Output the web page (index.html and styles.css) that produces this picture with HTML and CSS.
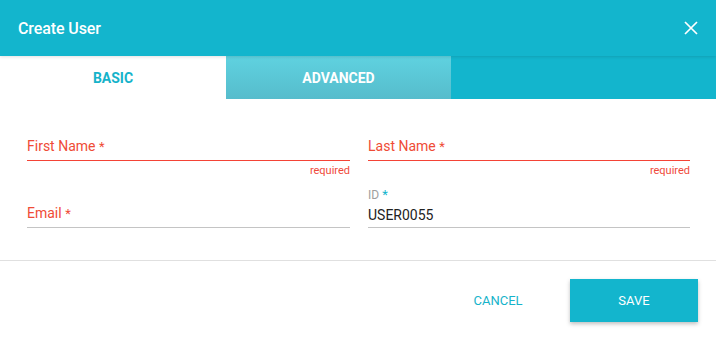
FILE: index.html
```html
<!DOCTYPE html>
<html>
<head>
<meta charset="utf-8">
<link rel="stylesheet" href="styles.css">
</head>
<body>
<div class="dialog">
  <header class="head">
    <div class="title-row">
      <h1 class="title">Create User</h1>
      <button class="close" aria-label="close">
        <svg width="14" height="14" viewBox="0 0 14 14"><path d="M1 1L13 13M13 1L1 13" stroke="#fff" stroke-width="1.7" fill="none"/></svg>
      </button>
    </div>
    <nav class="tabs">
      <div class="tab active">BASIC</div>
      <div class="tab inactive">ADVANCED</div>
    </nav>
  </header>
  <main class="form">
    <div class="field error">
      <label class="label">First Name <span class="star">*</span></label>
      <div class="line"></div>
      <div class="hint">required</div>
    </div>
    <div class="field error">
      <label class="label">Last Name <span class="star">*</span></label>
      <div class="line"></div>
      <div class="hint">required</div>
    </div>
    <div class="field error email">
      <label class="label">Email <span class="star">*</span></label>
      <div class="line grey"></div>
    </div>
    <div class="field filled">
      <label class="small-label">ID <span class="star teal">*</span></label>
      <div class="value">USER0055</div>
      <div class="line grey"></div>
    </div>
  </main>
  <footer class="actions">
    <button class="btn cancel">CANCEL</button>
    <button class="btn save">SAVE</button>
  </footer>
</div>
</body>
</html>
```
FILE: styles.css
```css
* { box-sizing: border-box; }
html, body { margin: 0; padding: 0; background: #fff; }
body { font-family: Roboto, "Noto Sans", sans-serif; width: 716px; height: 341px; overflow: hidden; }
.dialog { width: 716px; }
.head { background: #13b5cd; height: 99px; display: flex; flex-direction: column; }
.title-row { height: 56px; display: flex; align-items: center; justify-content: space-between; padding: 0 18px 0 18px; box-shadow: 0 1px 3px rgba(0,0,0,0.12); position: relative; z-index: 1; }
.title { margin: 0; font-size: 16px; font-weight: 500; color: #fff; letter-spacing: -0.1px; padding-top: 1px; }
.close { background: none; border: 0; padding: 0; width: 14px; height: 14px; display: flex; }
.tabs { display: flex; height: 43px; }
.tab { display: flex; align-items: center; justify-content: center; font-size: 14px; font-weight: 700; }
.tab.active { width: 226px; background: #fff; color: #16b3ca; }
.tab.inactive { width: 225px; background: linear-gradient(#5fd2e0, #56bccc); color: #fff; }
.form { display: grid; grid-template-columns: 323px 322px; grid-template-rows: 62px auto; column-gap: 18px; padding: 27px 0 0 27px; height: 162px; border-bottom: 1px solid #e0e0e0; }
.field { position: relative; }
.field.error { padding-top: 11px; }
.field.email { padding-top: 16px; }
.label { display: block; font-size: 14px; color: #ef4b36; height: 23px; line-height: 18px; }
.star { font-size: 13px; }
.star.teal { color: #13b5cd; }
.line { height: 1px; background: #f44336; }
.line.grey { background: #c4c4c4; }
.hint { text-align: right; font-size: 11px; color: #f04a3c; margin-top: 3px; line-height: 13px; }
.small-label { display: block; font-size: 12px; color: #9e9e9e; line-height: 14px; margin-bottom: 3px; }
.value { font-size: 14px; color: #222; height: 22px; line-height: 20px; }
.actions { display: flex; justify-content: flex-end; align-items: center; padding: 18px 18px 0 0; }
.btn { font-family: Roboto, sans-serif; border: 0; font-size: 13px; font-weight: 400; cursor: pointer; }
.cancel { background: none; color: #16b3ca; width: 100px; height: 43px; margin-right: 22px; }
.save { background: #13b5cd; color: #fff; width: 128px; height: 43px; box-shadow: 0 2px 4px rgba(0,0,0,0.25); }
```
